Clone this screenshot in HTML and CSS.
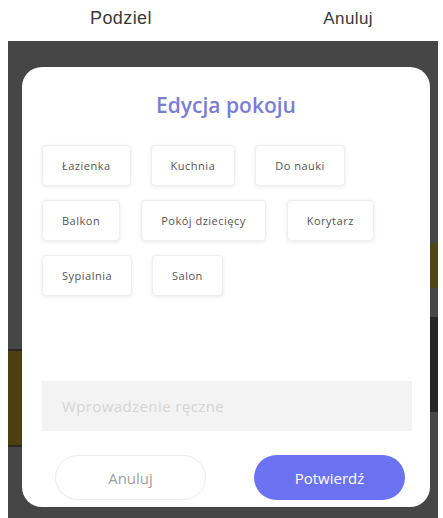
FILE: index.html
```html
<!DOCTYPE html>
<html lang="pl">
<head>
    <meta charset="UTF-8">
    <meta name="viewport" content="width=device-width, initial-scale=1.0">
    <title>Edycja pokoju</title>
    <link rel="stylesheet" href="styles.css">
</head>
<body>

<header class="top-bar">
    <span class="top-link">Podziel</span>
    <span class="top-link">Anuluj</span>
</header>

<div class="overlay">
    <!-- paski z tła strony, widoczne przy krawędziach -->
    <div class="peek peek-left"></div>
    <div class="peek peek-right-1"></div>
    <div class="peek peek-right-2"></div>

    <div class="modal">
        <h2 class="modal-title">Edycja pokoju</h2>

        <div class="chips">
            <div class="chip-row">
                <button class="chip">Łazienka</button>
                <button class="chip">Kuchnia</button>
                <button class="chip">Do nauki</button>
            </div>
            <div class="chip-row">
                <button class="chip">Balkon</button>
                <button class="chip">Pokój dziecięcy</button>
                <button class="chip">Korytarz</button>
            </div>
            <div class="chip-row">
                <button class="chip">Sypialnia</button>
                <button class="chip">Salon</button>
            </div>
        </div>

        <input class="manual-input" type="text" placeholder="Wprowadzenie ręczne">

        <div class="modal-footer">
            <button class="btn btn-cancel">Anuluj</button>
            <button class="btn btn-confirm">Potwierdź</button>
        </div>
    </div>
</div>

</body>
</html>
```

FILE: styles.css
```css
* {
    margin: 0;
    padding: 0;
    box-sizing: border-box;
}

body {
    font-family: "Open Sans", "Noto Sans", sans-serif;
    background-color: #fff;
    color: #333;
    width: 443px;
    height: 518px;
    overflow: hidden;
}

.top-bar {
    height: 41px;
    display: flex;
    align-items: center;
    padding-bottom: 4px;
}

.top-link {
    font-family: "Liberation Sans", Arial, sans-serif;
    font-size: 17px;
    letter-spacing: 0.4px;
    color: #3a3a3a;
}

.top-link:first-child {
    margin-left: 90px;
    font-size: 18px;
}

.top-link:last-child {
    margin-left: auto;
    margin-right: 70px;
}

.overlay {
    position: relative;
    margin-left: 8px;
    width: 430px;
    height: 477px;
    background-color: #464646;
    padding: 26px 8px 0 14px;
}

.peek {
    position: absolute;
}

.peek-left {
    left: 0;
    top: 308px;
    width: 14px;
    height: 98px;
    background-color: #4d3f10;
    border-top: 2px solid #2a2a22;
    border-bottom: 2px solid #2a2a22;
}

.peek-right-1 {
    right: 0;
    top: 202px;
    width: 8px;
    height: 45px;
    background-color: #4e4615;
}

.peek-right-2 {
    right: 0;
    top: 276px;
    width: 8px;
    height: 95px;
    background-color: #262626;
}

.modal {
    position: relative;
    z-index: 1;
    width: 408px;
    height: 440px;
    background-color: #fff;
    border-radius: 20px;
    padding: 23px 20px 0 20px;
    display: flex;
    flex-direction: column;
}

.modal-title {
    text-align: center;
    font-size: 21px;
    font-weight: 600;
    color: #7a7dd4;
    line-height: 30px;
}

.chips {
    margin-top: 25px;
    display: flex;
    flex-direction: column;
    gap: 14px;
}

.chip-row {
    display: flex;
    gap: 20px;
}

.chip-row:nth-child(2) {
    gap: 21px;
}

.chip {
    height: 41px;
    padding: 0 19px;
    background-color: #fff;
    border: 1px solid #eeeeee;
    border-radius: 4px;
    box-shadow: 0 1px 4px rgba(0, 0, 0, 0.09);
    font-family: "Open Sans", sans-serif;
    font-size: 11px;
    letter-spacing: 0.5px;
    color: #555;
}

.manual-input {
    margin-top: 85px;
    width: 370px;
    height: 50px;
    border: none;
    background-color: #f3f3f3;
    padding: 0 20px;
    font-family: "Open Sans", sans-serif;
    font-size: 15px;
    letter-spacing: 0.4px;
    outline: none;
}

.manual-input::placeholder {
    color: #d4d4d4;
}

.modal-footer {
    margin-top: 24px;
    display: flex;
    justify-content: space-between;
    padding: 0 5px 0 13px;
}

.btn {
    width: 151px;
    height: 45px;
    border-radius: 23px;
    font-family: "Open Sans", sans-serif;
    font-size: 15px;
    cursor: pointer;
}

.btn-cancel {
    background-color: #fff;
    border: 1px solid #ececec;
    color: #a0a0a0;
}

.btn-confirm {
    background-color: #6b73f2;
    border: none;
    color: #fff;
}
```
